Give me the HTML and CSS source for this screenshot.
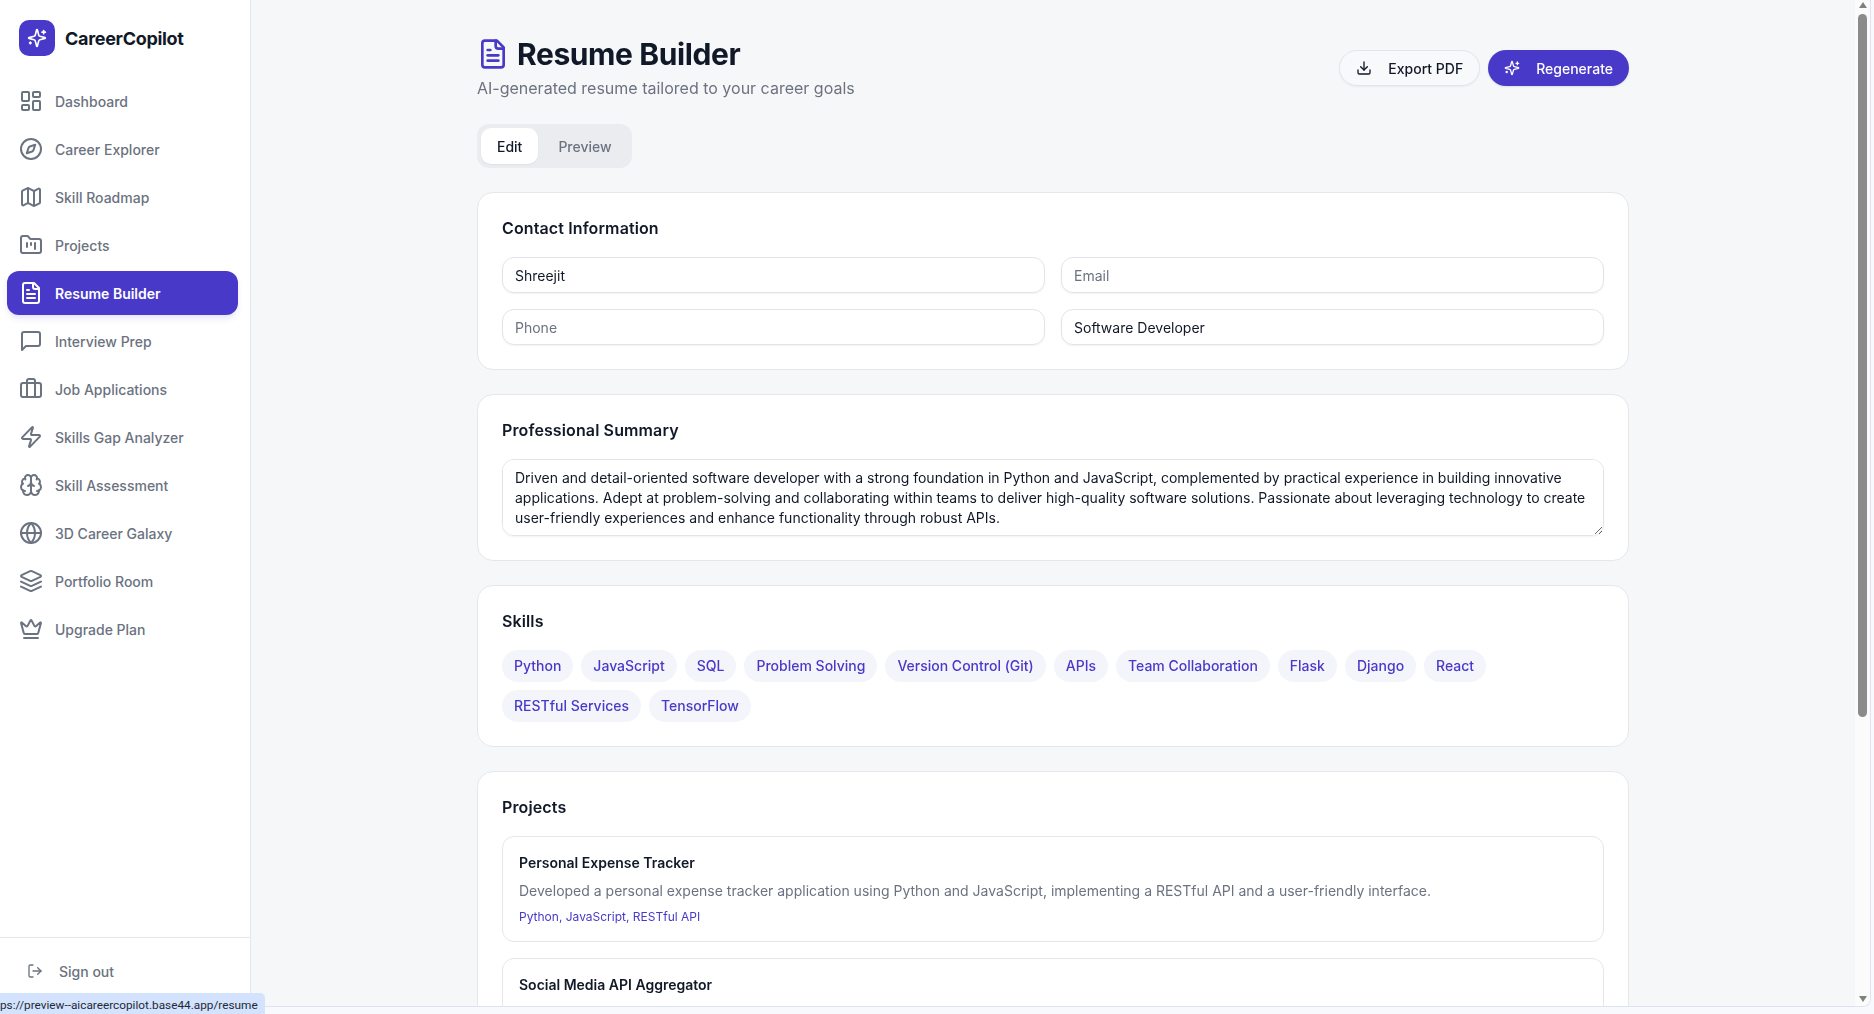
FILE: index.html
```html
<!DOCTYPE html>
<html lang="en">

<head>
    <meta charset="UTF-8">
    <meta name="viewport" content="width=device-width, initial-scale=1.0">
    <title>Resume Builder - CareerCopilot</title>
    <link rel="stylesheet" href="styles.css">
</head>

<body>
    <svg class="icon-defs" xmlns="http://www.w3.org/2000/svg">
        <symbol id="i-dashboard" viewBox="0 0 24 24"><rect x="3" y="3" width="7" height="9" rx="1" /><rect x="14" y="3" width="7" height="5" rx="1" /><rect x="14" y="12" width="7" height="9" rx="1" /><rect x="3" y="16" width="7" height="5" rx="1" /></symbol>
        <symbol id="i-compass" viewBox="0 0 24 24"><circle cx="12" cy="12" r="10" /><path d="m16.24 7.76-1.804 5.411a2 2 0 0 1-1.265 1.265L7.76 16.24l1.804-5.411a2 2 0 0 1 1.265-1.265z" /></symbol>
        <symbol id="i-map" viewBox="0 0 24 24"><path d="M14.106 5.553a2 2 0 0 0 1.788 0l3.659-1.83A1 1 0 0 1 21 4.619v12.764a1 1 0 0 1-.553.894l-4.553 2.277a2 2 0 0 1-1.788 0l-4.212-2.106a2 2 0 0 0-1.788 0l-3.659 1.83A1 1 0 0 1 3 19.381V6.618a1 1 0 0 1 .553-.894l4.553-2.277a2 2 0 0 1 1.788 0z" /><path d="M15 5.764v15" /><path d="M9 3.236v15" /></symbol>
        <symbol id="i-folder" viewBox="0 0 24 24"><path d="M4 20h16a2 2 0 0 0 2-2V8a2 2 0 0 0-2-2h-7.93a2 2 0 0 1-1.66-.9l-.82-1.2A2 2 0 0 0 7.93 3H4a2 2 0 0 0-2 2v13c0 1.1.9 2 2 2Z" /><path d="M8 10v4" /><path d="M12 10v2" /><path d="M16 10v6" /></symbol>
        <symbol id="i-file" viewBox="0 0 24 24"><path d="M15 2H6a2 2 0 0 0-2 2v16a2 2 0 0 0 2 2h12a2 2 0 0 0 2-2V7Z" /><path d="M14 2v4a2 2 0 0 0 2 2h4" /><path d="M10 9H8" /><path d="M16 13H8" /><path d="M16 17H8" /></symbol>
        <symbol id="i-message" viewBox="0 0 24 24"><path d="M21 15a2 2 0 0 1-2 2H7l-4 4V5a2 2 0 0 1 2-2h14a2 2 0 0 1 2 2z" /></symbol>
        <symbol id="i-briefcase" viewBox="0 0 24 24"><path d="M16 20V4a2 2 0 0 0-2-2h-4a2 2 0 0 0-2 2v16" /><rect x="2" y="6" width="20" height="14" rx="2" /></symbol>
        <symbol id="i-zap" viewBox="0 0 24 24"><path d="M4 14a1 1 0 0 1-.78-1.63l9.9-10.2a.5.5 0 0 1 .86.46l-1.92 6.02A1 1 0 0 0 13 10h7a1 1 0 0 1 .78 1.63l-9.9 10.2a.5.5 0 0 1-.86-.46l1.92-6.02A1 1 0 0 0 11 14z" /></symbol>
        <symbol id="i-brain" viewBox="0 0 24 24"><path d="M12 5a3 3 0 1 0-5.997.125 4 4 0 0 0-2.526 5.77 4 4 0 0 0 .556 6.588A4 4 0 1 0 12 18Z" /><path d="M12 5a3 3 0 1 1 5.997.125 4 4 0 0 1 2.526 5.77 4 4 0 0 1-.556 6.588A4 4 0 1 1 12 18Z" /><path d="M15 13a4.5 4.5 0 0 1-3-4 4.5 4.5 0 0 1-3 4" /><path d="M17.599 6.5a3 3 0 0 0 .399-1.375" /><path d="M6.003 5.125A3 3 0 0 0 6.401 6.5" /><path d="M3.477 10.896a4 4 0 0 1 .585-.396" /><path d="M19.938 10.5a4 4 0 0 1 .585.396" /><path d="M6 18a4 4 0 0 1-1.967-.516" /><path d="M19.967 17.484A4 4 0 0 1 18 18" /></symbol>
        <symbol id="i-globe" viewBox="0 0 24 24"><circle cx="12" cy="12" r="10" /><path d="M12 2a14.5 14.5 0 0 0 0 20 14.5 14.5 0 0 0 0-20" /><path d="M2 12h20" /></symbol>
        <symbol id="i-layers" viewBox="0 0 24 24"><path d="M12.83 2.18a2 2 0 0 0-1.66 0L2.6 6.08a1 1 0 0 0 0 1.83l8.58 3.91a2 2 0 0 0 1.66 0l8.58-3.9a1 1 0 0 0 0-1.83Z" /><path d="m22 17.65-9.17 4.16a2 2 0 0 1-1.66 0L2 17.65" /><path d="m22 12.65-9.17 4.16a2 2 0 0 1-1.66 0L2 12.65" /></symbol>
        <symbol id="i-crown" viewBox="0 0 24 24"><path d="M11.562 3.266a.5.5 0 0 1 .876 0L15.39 8.87a1 1 0 0 0 1.516.294L21.183 5.5a.5.5 0 0 1 .798.519l-2.834 10.246a1 1 0 0 1-.956.734H5.81a1 1 0 0 1-.957-.734L2.02 6.02a.5.5 0 0 1 .798-.519l4.276 3.664a1 1 0 0 0 1.516-.294z" /><path d="M5 21h14" /></symbol>
        <symbol id="i-logout" viewBox="0 0 24 24"><path d="M9 21H5a2 2 0 0 1-2-2V5a2 2 0 0 1 2-2h4" /><path d="m16 17 5-5-5-5" /><path d="M21 12H9" /></symbol>
        <symbol id="i-sparkles" viewBox="0 0 24 24"><path d="M9.937 15.5A2 2 0 0 0 8.5 14.063l-6.135-1.582a.5.5 0 0 1 0-.962L8.5 9.936A2 2 0 0 0 9.937 8.5l1.582-6.135a.5.5 0 0 1 .963 0L14.063 8.5A2 2 0 0 0 15.5 9.937l6.135 1.581a.5.5 0 0 1 0 .964L15.5 14.063a2 2 0 0 0-1.437 1.437l-1.582 6.135a.5.5 0 0 1-.963 0z" /><path d="M20 3v4" /><path d="M22 5h-4" /><path d="M4 17v2" /><path d="M5 18H3" /></symbol>
        <symbol id="i-download" viewBox="0 0 24 24"><path d="M21 15v4a2 2 0 0 1-2 2H5a2 2 0 0 1-2-2v-4" /><path d="m7 10 5 5 5-5" /><path d="M12 15V3" /></symbol>
    </svg>

    <div class="window">
        <aside class="sidebar">
            <div class="brand">
                <div class="brand-logo"><svg class="icon icon-logo"><use href="#i-sparkles" /></svg></div>
                <span class="brand-name">CareerCopilot</span>
            </div>
            <nav class="nav">
                <a class="nav-item"><svg class="icon"><use href="#i-dashboard" /></svg>Dashboard</a>
                <a class="nav-item"><svg class="icon"><use href="#i-compass" /></svg>Career Explorer</a>
                <a class="nav-item"><svg class="icon"><use href="#i-map" /></svg>Skill Roadmap</a>
                <a class="nav-item"><svg class="icon"><use href="#i-folder" /></svg>Projects</a>
                <a class="nav-item active"><svg class="icon"><use href="#i-file" /></svg>Resume Builder</a>
                <a class="nav-item"><svg class="icon"><use href="#i-message" /></svg>Interview Prep</a>
                <a class="nav-item"><svg class="icon"><use href="#i-briefcase" /></svg>Job Applications</a>
                <a class="nav-item"><svg class="icon"><use href="#i-zap" /></svg>Skills Gap Analyzer</a>
                <a class="nav-item"><svg class="icon"><use href="#i-brain" /></svg>Skill Assessment</a>
                <a class="nav-item"><svg class="icon"><use href="#i-globe" /></svg>3D Career Galaxy</a>
                <a class="nav-item"><svg class="icon"><use href="#i-layers" /></svg>Portfolio Room</a>
                <a class="nav-item"><svg class="icon"><use href="#i-crown" /></svg>Upgrade Plan</a>
            </nav>
            <div class="sidebar-foot">
                <a class="signout"><svg class="icon icon-sm"><use href="#i-logout" /></svg>Sign out</a>
            </div>
        </aside>

        <main class="main">
            <div class="content">
                <header class="page-head">
                    <div>
                        <h1 class="page-title"><svg class="icon icon-title"><use href="#i-file" /></svg>Resume Builder</h1>
                        <p class="page-sub">AI-generated resume tailored to your career goals</p>
                    </div>
                    <div class="head-actions">
                        <button class="btn btn-outline"><svg class="icon icon-sm"><use href="#i-download" /></svg>Export PDF</button>
                        <button class="btn btn-primary"><svg class="icon icon-sm"><use href="#i-sparkles" /></svg>Regenerate</button>
                    </div>
                </header>

                <div class="tabs">
                    <span class="tab tab-on">Edit</span>
                    <span class="tab">Preview</span>
                </div>

                <section class="card">
                    <h2 class="card-title">Contact Information</h2>
                    <div class="field-grid">
                        <input class="field" value="Shreejit">
                        <input class="field" placeholder="Email">
                        <input class="field" placeholder="Phone">
                        <input class="field" value="Software Developer">
                    </div>
                </section>

                <section class="card">
                    <h2 class="card-title">Professional Summary</h2>
                    <textarea class="field summary">Driven and detail-oriented software developer with a strong foundation in Python and JavaScript, complemented by practical experience in building innovative applications. Adept at problem-solving and collaborating within teams to deliver high-quality software solutions. Passionate about leveraging technology to create user-friendly experiences and enhance functionality through robust APIs.</textarea>
                </section>

                <section class="card">
                    <h2 class="card-title">Skills</h2>
                    <div class="chips">
                        <span class="chip">Python</span>
                        <span class="chip">JavaScript</span>
                        <span class="chip">SQL</span>
                        <span class="chip">Problem Solving</span>
                        <span class="chip">Version Control (Git)</span>
                        <span class="chip">APIs</span>
                        <span class="chip">Team Collaboration</span>
                        <span class="chip">Flask</span>
                        <span class="chip">Django</span>
                        <span class="chip">React</span>
                        <span class="chip">RESTful Services</span>
                        <span class="chip">TensorFlow</span>
                    </div>
                </section>

                <section class="card">
                    <h2 class="card-title">Projects</h2>
                    <div class="project">
                        <h3 class="project-name">Personal Expense Tracker</h3>
                        <p class="project-desc">Developed a personal expense tracker application using Python and JavaScript, implementing a RESTful API and a user-friendly interface.</p>
                        <p class="project-tech">Python, JavaScript, RESTful API</p>
                    </div>
                    <div class="project">
                        <h3 class="project-name">Social Media API Aggregator</h3>
                    </div>
                </section>
            </div>
        </main>

        <div class="scrollbar">
            <div class="arrow-up"></div>
            <div class="thumb"></div>
            <div class="arrow-down"></div>
        </div>
    </div>

    <div class="status-url">ps://preview--aicareercopilot.base44.app/resume</div>
</body>

</html>
```

FILE: styles.css
```css
* {
    box-sizing: border-box;
}

body {
    position: relative;
    margin: 0;
    height: 1014px;
    overflow: hidden;
    background-color: #f8f9fc;
    font-family: 'Inter', 'Liberation Sans', sans-serif;
    color: #111827;
}

.icon-defs {
    display: none;
}

.window {
    display: flex;
    width: 1871px;
    height: 1007px;
    overflow: hidden;
    border-right: 1px solid #dde3ef;
    border-bottom: 1px solid #dde3ef;
    border-bottom-right-radius: 8px;
    background-color: #f6f7f9;
}

.icon {
    width: 24px;
    height: 24px;
    flex-shrink: 0;
    fill: none;
    stroke: currentColor;
    stroke-width: 2;
    stroke-linecap: round;
    stroke-linejoin: round;
}

.icon-sm {
    width: 16px;
    height: 16px;
}

/* Sidebar */
.sidebar {
    width: 251px;
    flex-shrink: 0;
    display: flex;
    flex-direction: column;
    background-color: #fff;
    border-right: 1px solid #e5e7eb;
}

.brand {
    display: flex;
    align-items: center;
    gap: 10px;
    padding: 20px 19px 23px;
}

.brand-logo {
    width: 36px;
    height: 36px;
    border-radius: 10px;
    background-color: #4839c8;
    color: #fff;
    display: flex;
    justify-content: center;
    align-items: center;
}

.icon-logo {
    width: 20px;
    height: 20px;
}

.brand-name {
    font-size: 18px;
    font-weight: 700;
    letter-spacing: -0.3px;
}

.nav {
    display: flex;
    flex-direction: column;
    gap: 4px;
    padding: 0 12px 0 7px;
    flex: 1;
}

.nav-item {
    display: flex;
    align-items: center;
    gap: 12px;
    height: 44px;
    padding: 0 12px;
    border-radius: 12px;
    font-size: 14px;
    font-weight: 500;
    color: #6b7280;
}

.nav-item.active {
    background-color: #4839c8;
    color: #fff;
    font-weight: 600;
    box-shadow: 0 4px 6px -1px rgba(72, 57, 200, 0.15);
}

.sidebar-foot {
    height: 69px;
    border-top: 1px solid #e5e7eb;
    padding: 15px 27px;
}

.signout {
    display: flex;
    align-items: center;
    gap: 16px;
    height: 36px;
    font-size: 14px;
    font-weight: 500;
    color: #6b7280;
}

/* Main column */
.main {
    flex: 1;
    min-width: 0;
    overflow: hidden;
    padding: 36px 0 0;
}

.content {
    width: 1152px;
    margin: 0 auto;
}

.page-head {
    display: flex;
    justify-content: space-between;
    align-items: center;
    margin-bottom: 24px;
}

.page-title {
    display: flex;
    align-items: center;
    gap: 8px;
    margin: 0;
    font-size: 30px;
    line-height: 36px;
    font-weight: 700;
    letter-spacing: -0.4px;
    color: #111827;
}

.icon-title {
    width: 32px;
    height: 32px;
    color: #4839c8;
}

.page-sub {
    margin: 4px 0 0;
    font-size: 16px;
    line-height: 24px;
    color: #6b7280;
}

.head-actions {
    display: flex;
    gap: 8px;
}

.btn {
    display: flex;
    align-items: center;
    gap: 16px;
    height: 36px;
    padding: 0 16px;
    border-radius: 18px;
    font-family: inherit;
    font-size: 14px;
    font-weight: 500;
}

.btn-outline {
    background-color: #f8f9fb;
    border: 1px solid #e2e4ea;
    color: #111827;
    box-shadow: 0 1px 2px rgba(0, 0, 0, 0.05);
}

.btn-primary {
    background-color: #4839c8;
    border: none;
    color: #fff;
    box-shadow: 0 1px 2px rgba(0, 0, 0, 0.1);
}

.tabs {
    display: inline-flex;
    gap: 4px;
    height: 44px;
    padding: 4px;
    margin-bottom: 24px;
    border-radius: 12px;
    background-color: #ebecf0;
    vertical-align: top;
}

.tab {
    display: flex;
    align-items: center;
    padding: 0 16px;
    border-radius: 10px;
    font-size: 14px;
    font-weight: 500;
    color: #6b7280;
}

.tab-on {
    background-color: #fff;
    color: #111827;
    box-shadow: 0 1px 2px rgba(0, 0, 0, 0.05);
}

/* Cards */
.card {
    padding: 24px;
    margin-bottom: 24px;
    background-color: #fff;
    border: 1px solid #e5e7eb;
    border-radius: 16px;
}

.card-title {
    margin: 0 0 18px;
    font-size: 16px;
    line-height: 22px;
    font-weight: 600;
    letter-spacing: 0.12px;
}

.field-grid {
    display: grid;
    grid-template-columns: 1fr 1fr;
    gap: 16px;
}

.field {
    display: block;
    width: 100%;
    height: 36px;
    padding: 0 12px;
    border: 1px solid #e2e4ea;
    border-radius: 12px;
    background-color: #fff;
    box-shadow: 0 1px 2px rgba(0, 0, 0, 0.05);
    font-family: inherit;
    font-size: 14px;
    color: #111827;
    outline: none;
}

.field::placeholder {
    color: #6b7280;
}

.summary {
    height: 77px;
    padding: 8px 12px;
    line-height: 20px;
}

.chips {
    display: flex;
    flex-wrap: wrap;
    gap: 8px;
}

.chip {
    height: 32px;
    padding: 0 12px;
    border-radius: 16px;
    background-color: #f4f5fb;
    color: #4839c8;
    font-size: 14px;
    font-weight: 500;
    line-height: 32px;
}

.project {
    padding: 16px;
    margin-bottom: 16px;
    border: 1px solid #e5e7eb;
    border-radius: 12px;
}

.project-name {
    margin: 0 0 8px;
    font-size: 14px;
    line-height: 20px;
    font-weight: 600;
}

.project-desc {
    margin: 0 0 8px;
    font-size: 14px;
    line-height: 20px;
    color: #6b7280;
}

.project-tech {
    margin: 0;
    font-size: 12px;
    line-height: 16px;
    color: #4839c8;
}

/* Browser chrome */
.scrollbar {
    width: 15px;
    flex-shrink: 0;
    display: flex;
    flex-direction: column;
    align-items: center;
    background-color: #fbfbfb;
}

.arrow-up {
    margin-top: 2px;
    border-left: 4.5px solid transparent;
    border-right: 4.5px solid transparent;
    border-bottom: 6px solid #808080;
}

.thumb {
    width: 9px;
    height: 703px;
    margin-top: 6px;
    border-radius: 5px;
    background-color: #8b8b8b;
}

.arrow-down {
    margin-top: auto;
    margin-bottom: 4px;
    border-left: 4.5px solid transparent;
    border-right: 4.5px solid transparent;
    border-top: 6px solid #808080;
}

.status-url {
    position: absolute;
    left: 0;
    bottom: 0;
    width: 265px;
    height: 21px;
    padding-right: 8px;
    border-top-right-radius: 5px;
    background-color: #d3e3fd;
    font-family: 'Roboto', sans-serif;
    font-size: 11.8px;
    line-height: 24px;
    text-align: right;
    white-space: nowrap;
    color: #1f2937;
}
```
